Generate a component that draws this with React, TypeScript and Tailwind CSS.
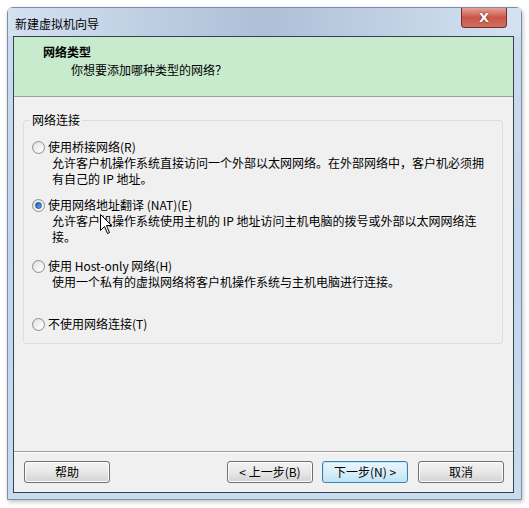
import React from "react";

const FONT = { fontFamily: '"Noto Sans CJK SC", "Liberation Sans", sans-serif' };

function Radio({ checked }: { checked?: boolean }) {
  return (
    <span className="relative inline-flex h-[13px] w-[13px] shrink-0 items-center justify-center rounded-full border border-[#8e8f8f] bg-gradient-to-br from-[#dcdcdc] to-[#fbfbfb]">
      <span className="h-[9px] w-[9px] rounded-full bg-gradient-to-br from-[#e4e4e4] to-[#ffffff]" />
      {checked && (
        <span className="absolute left-[2px] top-[2px] h-[7px] w-[7px] rounded-full bg-gradient-to-br from-[#1b5bb8] to-[#6ea8ea] border border-[#1c4f9b]" />
      )}
    </span>
  );
}

function Btn({ children, def }: { children: React.ReactNode; def?: boolean }) {
  return (
    <div
      className={
        "flex h-[22px] w-[86px] items-center justify-center rounded-[3px] border text-[12px] leading-none text-black " +
        (def
          ? "border-[#3c7fb1] bg-gradient-to-b from-[#e8f5fc] via-[#d9effa] to-[#bfe2f5] shadow-[inset_0_0_0_1px_#bfe6fb]"
          : "border-[#707070] bg-gradient-to-b from-[#f3f3f3] via-[#e8e8e8] to-[#d2d2d2] shadow-[inset_0_0_0_1px_#fcfcfc]")
      }
    >
      {children}
    </div>
  );
}

export default function App() {
  return (
    <div className="relative h-[508px] w-[529px] bg-white pl-[7px] pr-[7px] pt-[7px] pb-[8px]" style={FONT}>
      <div className="flex h-full flex-col rounded-t-[6px] border border-[#7b8ea6] bg-gradient-to-b from-[#cddcee] via-[#c3d5eb] to-[#c9dbee] shadow-[1px_2px_4px_rgba(0,0,0,0.25)]">
        {/* title bar */}
        <div className="relative flex h-[28px] items-start justify-between bg-gradient-to-r from-[#d3e1f1] via-[#aebfd6] to-[#d4e2f2]">
          <div className="pl-[7px] pt-[8px] text-[12px] leading-[16px] text-black">新建虚拟机向导</div>
          <div className="mr-[14px] flex h-[20px] w-[46px] items-center justify-center rounded-b-[4px] border border-t-0 border-[#7a2a22] bg-gradient-to-b from-[#e8a196] via-[#c9564a] to-[#d0705f] text-[13px] font-bold leading-none text-white" style={{ fontFamily: '"DejaVu Sans", sans-serif', textShadow: "0 0 2px #5a1a14" }}>
            X
          </div>
        </div>
        {/* client */}
        <div className="ml-[5px] mr-[7px] mb-[6px] flex flex-1 flex-col border border-[#35414f] bg-[#f0f0f0]">
          {/* header */}
          <div className="h-[60px] border-b border-[#a0a0a0] bg-[#c8ebcd] pt-[7px]">
            <div className="pl-[29px] text-[12px] font-bold leading-[16px] text-black">网络类型</div>
            <div className="mt-[2px] pl-[57px] text-[12px] leading-[16px] text-black">你想要添加哪种类型的网络？</div>
          </div>
          {/* body */}
          <div className="flex-1 pt-[23px] pl-[9px] pr-[10px]">
            <div className="relative h-[224px] rounded-[3px] border border-[#d5dfe5] pl-[8px] pt-[18px] text-[12px] text-black">
              <div className="absolute -top-[9px] left-[6px] bg-[#f0f0f0] px-[2px] leading-[16px]">网络连接</div>

              <div className="flex items-center gap-[3px] leading-[16px]">
                <Radio />
                <span>使用桥接网络(R)</span>
              </div>
              <div className="pl-[20px] leading-[16px]">
                <div>允许客户机操作系统直接访问一个外部以太网网络。在外部网络中，客户机必须拥</div>
                <div>有自己的 IP 地址。</div>
              </div>

              <div className="mt-[10px] flex items-center gap-[3px] leading-[16px]">
                <Radio checked />
                <span>使用网络地址翻译 (NAT)(E)</span>
              </div>
              <div className="pl-[20px] leading-[16px]">
                <div>允许客户机操作系统使用主机的 IP 地址访问主机电脑的拨号或外部以太网网络连</div>
                <div>接。</div>
              </div>

              <div className="mt-[13px] flex items-center gap-[3px] leading-[16px]">
                <Radio />
                <span>使用 Host-only 网络(H)</span>
              </div>
              <div className="pl-[20px] leading-[16px]">
                <div>使用一个私有的虚拟网络将客户机操作系统与主机电脑进行连接。</div>
              </div>

              <div className="mt-[26px] flex items-center gap-[3px] leading-[16px]">
                <Radio />
                <span>不使用网络连接(T)</span>
              </div>
            </div>
          </div>
          {/* footer */}
          <div className="flex h-[41px] items-start border-t border-[#a0a0a0] pt-[9px] pl-[10px] pr-[9px] shadow-[inset_0_1px_0_#ffffff]">
            <Btn>帮助</Btn>
            <div className="flex-1" />
            <div className="flex gap-[9px]">
              <Btn>&lt; 上一步(B)</Btn>
              <Btn def>下一步(N) &gt;</Btn>
              <div className="ml-[1px]">
                <Btn>取消</Btn>
              </div>
            </div>
          </div>
        </div>
      </div>
      {/* mouse cursor */}
      <svg className="absolute left-[100px] top-[214px]" width="13" height="21" viewBox="0 0 13 21">
        <path d="M0.5 0.5 L0.5 16.5 L4.5 12.5 L7.5 19.5 L9.5 18.5 L6.5 11.5 L11.5 11.5 Z" fill="#ffffff" stroke="#000000" strokeWidth="1" />
      </svg>
    </div>
  );
}
